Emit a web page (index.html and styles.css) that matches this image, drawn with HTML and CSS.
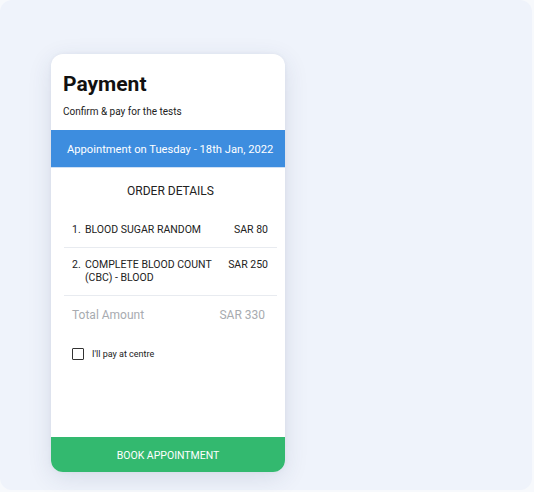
FILE: index.html
```html
<!DOCTYPE html>
<html>
<head>
<meta charset="utf-8">
<link rel="stylesheet" href="styles.css">
</head>
<body>
<div class="panel">
  <div class="card">
    <div class="head">
      <h1 class="title">Payment</h1>
      <p class="sub">Confirm &amp; pay for the tests</p>
    </div>
    <div class="banner">Appointment on Tuesday - 18th Jan, 2022</div>
    <div class="order">
      <div class="order-title">ORDER DETAILS</div>
      <div class="row">
        <div class="item"><span class="num">1.</span><span>BLOOD SUGAR RANDOM</span></div>
        <div class="price">SAR 80</div>
      </div>
      <div class="row">
        <div class="item"><span class="num">2.</span><span>COMPLETE BLOOD COUNT (CBC) - BLOOD</span></div>
        <div class="price">SAR 250</div>
      </div>
      <div class="row total">
        <div class="item">Total Amount</div>
        <div class="price">SAR 330</div>
      </div>
      <label class="check"><span class="box"></span><span>I'll pay at centre</span></label>
    </div>
    <div class="btn">BOOK APPOINTMENT</div>
  </div>
</div>
</body>
</html>
```
FILE: styles.css
```css
* { box-sizing: border-box; }
html, body { margin: 0; padding: 0; }
body {
  background: #f7f9fc;
  font-family: Roboto, "Noto Sans", sans-serif;
  width: 534px;
  height: 492px;
  overflow: hidden;
}
.panel {
  width: 532px;
  height: 490px;
  background: #eff3fb;
  border-radius: 12px;
  padding: 54px 0 0 51px;
}
.card {
  width: 234px;
  height: 418px;
  background: #fff;
  border-radius: 12px;
  box-shadow: 0 6px 24px rgba(40, 60, 100, 0.12), 0 0 4px rgba(40,60,100,0.05);
  display: flex;
  flex-direction: column;
  overflow: hidden;
}
.head { padding: 17px 12px 0 12px; height: 76px; }
.title {
  margin: 0;
  font-size: 21px;
  font-weight: 700;
  color: #111;
  line-height: 26px;
}
.sub {
  margin: 9px 0 0 0;
  font-size: 10px;
  color: #222;
  line-height: 12px;
}
.banner {
  height: 38px;
  background: #3d8ddf;
  color: #fff;
  font-size: 11.2px;
  white-space: nowrap;
  display: flex;
  align-items: center;
  padding-left: 16px;
  padding-top: 1px;
  border-bottom: 1px solid #cfe0f4;
}
.order {
  flex: 1;
  padding: 0 8px 0 13px;
}
.order-title {
  text-align: center;
  font-size: 12px;
  color: #222;
  margin-top: 16px;
  margin-bottom: 15px;
  line-height: 14px;
}
.row {
  display: flex;
  justify-content: space-between;
  padding: 10px 9px 11px 8px;
  border-bottom: 1px solid #e8ebf0;
  font-size: 10.5px;
  line-height: 13px;
  color: #222;
}
.item { display: flex; width: 150px; }
.num { width: 13px; flex: none; }
.price { text-align: right; white-space: nowrap; }
.total {
  border-bottom: none;
  color: #a8abb0;
  font-size: 12px;
  padding-top: 13px;
  padding-right: 12px;
}
.check {
  display: flex;
  align-items: center;
  gap: 8px;
  margin: 15px 0 0 8px;
  font-size: 9px;
  color: #222;
}
.box {
  width: 12px;
  height: 12px;
  border: 1.5px solid #333;
  border-radius: 1px;
}
.btn {
  height: 35px;
  background: #33b96f;
  color: #fff;
  font-size: 10.5px;
  padding-top: 2px;
  display: flex;
  align-items: center;
  justify-content: center;
}
```
